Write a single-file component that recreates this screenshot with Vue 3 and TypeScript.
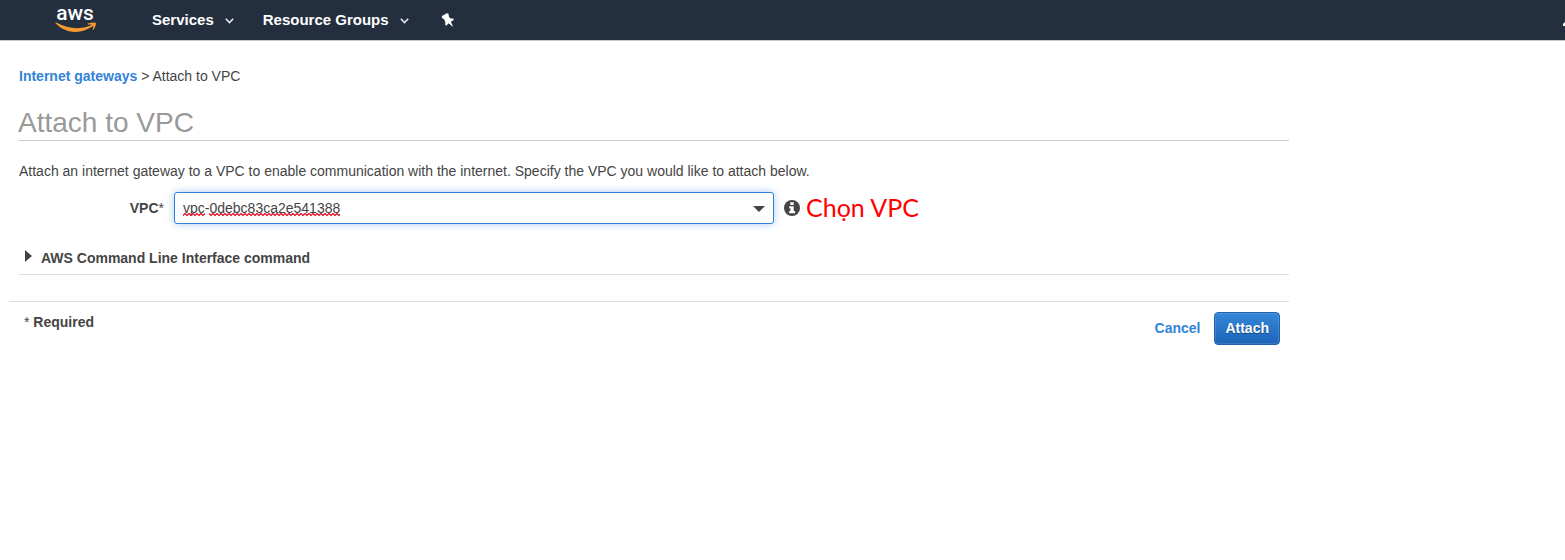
<script setup lang="ts">
import { ref } from 'vue'

const vpcId = ref<string>('vpc-0debc83ca2e541388')
const cliOpen = ref<boolean>(false)
const menus: string[] = ['Services', 'Resource Groups']
</script>

<template>
  <div class="console">
    <header class="topbar">
      <a class="logo" href="#" aria-label="AWS home">
        <svg width="44" height="40" viewBox="0 0 44 40">
          <text class="logo-text" x="21" y="20" text-anchor="middle">aws</text>
          <path d="M1 22.800 L2.200 22.500 Q20 32 37 25.600 L38 26.400 Q30 32 20 32 Q9 31.500 1 22.800 Z" fill="#f79a2f" />
          <path d="M33.500 23.400 Q40.500 21.600 42 23 Q42.200 26.500 39.300 29.900 L38.600 29.500 L39.600 25.800 L36.500 27.200 L35.500 26 L38.200 24.500 L33.800 24.400 Z" fill="#f79a2f" />
        </svg>
      </a>
      <nav class="menus" aria-label="Console">
        <button v-for="menu in menus" :key="menu" type="button" class="menu">
          <span>{{ menu }}</span>
          <svg width="9" height="6" viewBox="0 0 9 6" aria-hidden="true">
            <path d="M.8 .8 L4.500 4.500 L8.200 .8" fill="none" stroke="#e4e6e8" stroke-width="1.600" />
          </svg>
        </button>
        <button type="button" class="pin" aria-label="Edit shortcuts">
          <svg width="14" height="16" viewBox="0 0 14 16" aria-hidden="true">
            <path d="M5.800 1.200 L7.600 1.800 L7.800 4.500 L9.500 6.500 L12.300 6.500 L12.800 8 L9.800 9.800 L12 14.200 L11.500 14.500 L7.600 11.300 L5.500 13.600 L4.300 13.300 L4.300 10.300 L3.300 7.600 L.8 5.800 L1 4 Z" fill="#fff" />
          </svg>
        </button>
      </nav>
      <button type="button" class="bell" aria-label="Notifications">
        <svg width="2" height="5" viewBox="0 0 2 5" aria-hidden="true">
          <path d="M2 0 L0 2 V4 H2 Z" fill="#fff" />
        </svg>
      </button>
    </header>

    <main class="page">
      <nav class="crumbs" aria-label="Breadcrumb">
        <a href="#">Internet gateways</a> &gt; <span>Attach to VPC</span>
      </nav>
      <h1>Attach to VPC</h1>
      <p class="intro">
        Attach an internet gateway to a VPC to enable communication with the internet. Specify the VPC you would like to attach below.
      </p>

      <form @submit.prevent>
        <div class="row">
          <label for="vpc">VPC<span class="star">*</span></label>
          <div class="combo">
            <input id="vpc" v-model="vpcId" type="text" role="combobox" aria-expanded="false" spellcheck="false" autocomplete="off" />
            <svg class="squiggle" width="158" height="3" viewBox="0 0 158 3" aria-hidden="true">
              <defs>
                <pattern id="wave" width="4" height="3" patternUnits="userSpaceOnUse">
                  <path d="M-1 1.500 L0 2.500 L2 .5 L4 2.500 L5 1.500" fill="none" stroke="#e8112d" stroke-width="1.300" />
                </pattern>
              </defs>
              <rect width="22" height="3" fill="url(#wave)" />
              <rect x="26" width="131" height="3" fill="url(#wave)" />
            </svg>
            <button type="button" class="drop" aria-label="Show VPCs">
              <svg width="12" height="6" viewBox="0 0 12 6" aria-hidden="true"><path d="M0 0 H12 L6 6 Z" fill="#444" /></svg>
            </button>
          </div>
          <button type="button" class="info" aria-label="VPC information">
            <svg width="16" height="16" viewBox="0 0 16 16" aria-hidden="true">
              <circle cx="8" cy="8" r="8" fill="#444" />
              <path d="M6.300 2.200 H9.700 V5 H6.300 Z M5.200 6.200 H9.700 V11 H11 V13.200 H5.200 V11 H6.400 V8.300 H5.200 Z" fill="#fff" />
            </svg>
          </button>
          <span class="note" lang="vi">Chọn VPC</span>
        </div>

        <button type="button" class="cli" :aria-expanded="cliOpen" @click="cliOpen = !cliOpen">
          <svg width="7" height="12" viewBox="0 0 7 12" aria-hidden="true"><path d="M0 0 L7 6 L0 12 Z" fill="#444" /></svg>
          <span>AWS Command Line Interface command</span>
        </button>

        <footer class="actions">
          <p><span class="star">*</span> Required</p>
          <div class="buttons">
            <a href="#">Cancel</a>
            <button type="submit" class="primary">Attach</button>
          </div>
        </footer>
      </form>
    </main>
  </div>
</template>

<style>
body {
  margin: 0;
  background: #fff;
}
</style>

<style scoped>
.console {
  font-family: "Liberation Sans", Arial, sans-serif;
  font-size: 14px;
  line-height: 20px;
  color: #444;
}
button {
  padding: 0;
  border: 0;
  background: none;
  color: inherit;
  font: inherit;
  cursor: pointer;
}
svg {
  display: block;
}
a {
  color: #3184d8;
  font-weight: bold;
  text-decoration: none;
}
.topbar {
  display: flex;
  align-items: center;
  box-sizing: border-box;
  height: 41px;
  padding-left: 54px;
  background: #232f3e;
  border-bottom: 1px solid #c6c8ca;
}
.logo-text {
  fill: #fff;
  font-family: Roboto, sans-serif;
  font-size: 21px;
  font-weight: 500;
}
.menus {
  display: flex;
  align-items: center;
  margin-left: 54px;
}
.menu {
  display: flex;
  align-items: center;
  gap: 11px;
  margin-right: 29px;
  color: #fff;
  font-size: 15px;
  font-weight: bold;
}
.menu svg {
  margin-top: 2px;
}
.pin {
  margin-left: 3px;
}
.bell {
  margin-left: auto;
  padding-top: 9px;
}
.page {
  box-sizing: border-box;
  max-width: 1289px;
  padding: 25px 0 0 19px;
}
h1 {
  margin: 20px 0 0 -1px;
  border-bottom: 1px solid #ccc;
  color: #999;
  font-size: 28px;
  font-weight: normal;
  line-height: 34px;
}
.intro {
  margin: 20px 0 11px;
}
.row {
  display: flex;
  align-items: center;
}
.row label {
  flex: none;
  width: 145px;
  margin-right: 10px;
  font-weight: bold;
  text-align: right;
}
.star {
  font-weight: normal;
}
.combo {
  position: relative;
  flex: 0 1 600px;
}
.combo input {
  display: block;
  box-sizing: border-box;
  width: 100%;
  height: 32px;
  padding: 0 32px 0 8px;
  border: 1px solid #2e82da;
  border-radius: 3px;
  outline: none;
  background: #fff;
  box-shadow: 0 0 8px rgba(46, 130, 218, 0.4);
  color: #444;
  font: inherit;
}
.squiggle {
  position: absolute;
  left: 9px;
  bottom: 8px;
  pointer-events: none;
}
.drop {
  position: absolute;
  top: 2px;
  right: 1px;
  bottom: 0;
  padding: 0 8px;
}
.info {
  flex: none;
  margin: 0 6px 0 10px;
}
.note {
  padding-bottom: 2px;
  color: #f00;
  font-family: Lato, "Open Sans", sans-serif;
  font-size: 25px;
  line-height: 30px;
}
.cli {
  display: flex;
  align-items: center;
  gap: 9px;
  width: 100%;
  margin-top: 24px;
  padding: 0 0 6px 6px;
  border-bottom: 1px solid #ddd;
  font-weight: bold;
}
.cli svg {
  margin-bottom: 4px;
}
.actions {
  display: flex;
  justify-content: space-between;
  margin: 26px 0 0 -10px;
  padding: 10px 9px 0 15px;
  border-top: 1px solid #ddd;
}
.actions p {
  margin: 0;
  font-weight: bold;
}
.buttons {
  display: flex;
  align-items: baseline;
  gap: 14px;
}
.primary {
  padding: 5px 10px 6px;
  border: 1px solid #1f62ad;
  border-radius: 4px;
  background: linear-gradient(#3587d9, #1c64b8);
  box-shadow: inset 0 0 0 1px rgba(255, 255, 255, 0.12);
  color: #fff;
  font-weight: bold;
  text-shadow: 0 1px 1px rgba(0, 0, 0, 0.4);
}
</style>
